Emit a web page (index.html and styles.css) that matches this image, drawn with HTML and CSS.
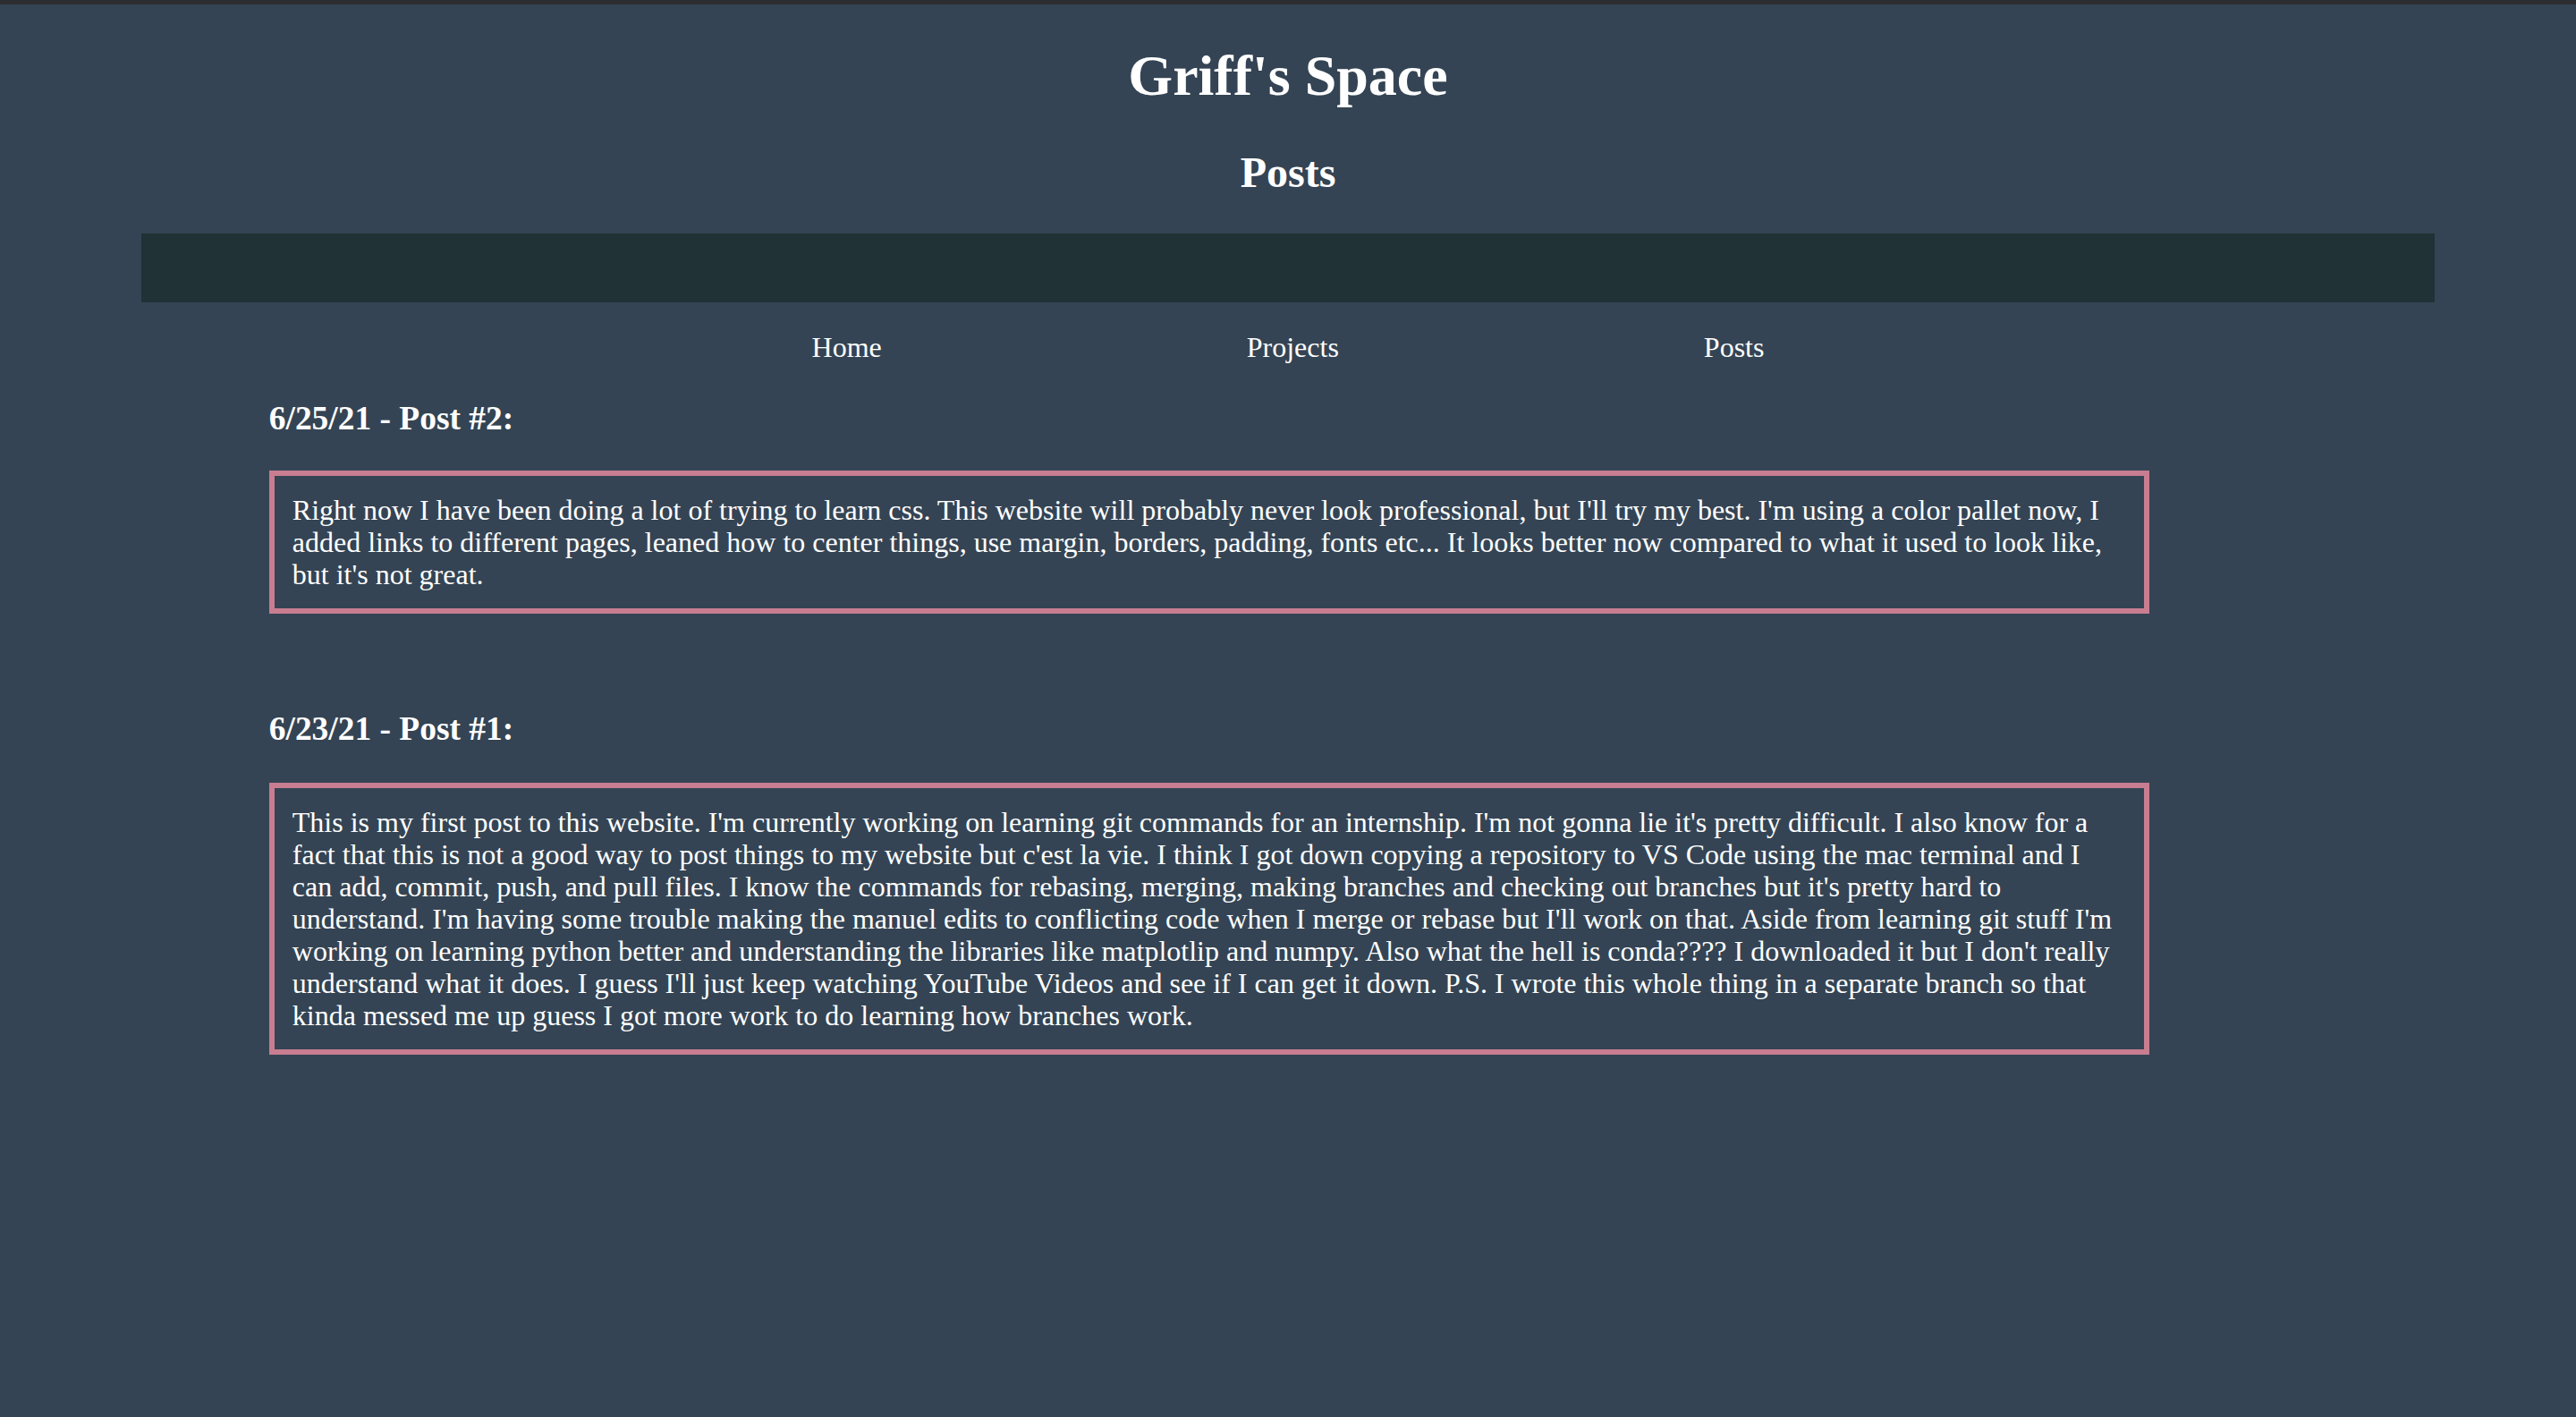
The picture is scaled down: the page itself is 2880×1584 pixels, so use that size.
FILE: index.html
```html
<!DOCTYPE html>
<html lang="en">
<head>
<meta charset="utf-8">
<title>Griff's Space - Posts</title>
<link rel="stylesheet" href="styles.css">
</head>
<body>
<h1 class="site-title">Griff's Space</h1>
<h2 class="page-title">Posts</h2>
<div class="banner"></div>
<nav class="nav">
<a class="nav-link" href="#">Home</a>
<a class="nav-link" href="#">Projects</a>
<a class="nav-link" href="#">Posts</a>
</nav>
<main class="posts">
<section class="post">
<h3 class="post-title">6/25/21 - Post #2:</h3>
<p class="post-body">Right now I have been doing a lot of trying to learn css. This website will probably never look professional, but I'll try my best. I'm using a color pallet now, I added links to different pages, leaned how to center things, use margin, borders, padding, fonts etc... It looks better now compared to what it used to look like, but it's not great.</p>
</section>
<section class="post">
<h3 class="post-title">6/23/21 - Post #1:</h3>
<p class="post-body">This is my first post to this website. I'm currently working on learning git commands for an internship. I'm not gonna lie it's pretty difficult. I also know for a fact that this is not a good way to post things to my website but c'est la vie. I think I got down copying a repository to VS Code using the mac terminal and I can add, commit, push, and pull files. I know the commands for rebasing, merging, making branches and checking out branches but it's pretty hard to understand. I'm having some trouble making the manuel edits to conflicting code when I merge or rebase but I'll work on that. Aside from learning git stuff I'm working on learning python better and understanding the libraries like matplotlip and numpy. Also what the hell is conda???? I downloaded it but I don't really understand what it does. I guess I'll just keep watching YouTube Videos and see if I can get it down. P.S. I wrote this whole thing in a separate branch so that kinda messed me up guess I got more work to do learning how branches work.</p>
</section>
</main>
</body>
</html>
```
FILE: styles.css
```css
html {
  border-top: 5px solid #2c2d30;
}

body {
  margin: 0 16px 16px;
  background: #344454;
  color: #ffffff;
  font-family: "Liberation Serif", "Times New Roman", serif;
  font-size: 32px;
}

.site-title {
  font-size: 64px;
  font-weight: bold;
  text-align: center;
  margin: 42.88px 0;
}

.page-title {
  font-size: 48px;
  font-weight: bold;
  text-align: center;
  margin: 39.84px 0 41px;
}

.banner {
  width: 90%;
  height: 77px;
  margin: 0 auto;
  background: #213236;
}

.nav {
  text-align: center;
  line-height: 36px;
  margin: 32px 0 0;
}

.nav-link {
  color: #ffffff;
  text-decoration: none;
  margin: 0 200px;
}

.posts {
  display: flex;
  flex-direction: column;
  gap: 67px;
  margin: 0 10%;
}

.post-title {
  font-size: 37.44px;
  font-weight: bold;
  line-height: 43px;
  margin: 40px 0 37px;
}

.post + .post .post-title {
  margin-bottom: 39px;
}

.post-body {
  width: 90%;
  margin: 0;
  padding: 20px;
  border: 6px solid #c87d91;
  line-height: 36px;
}
```
